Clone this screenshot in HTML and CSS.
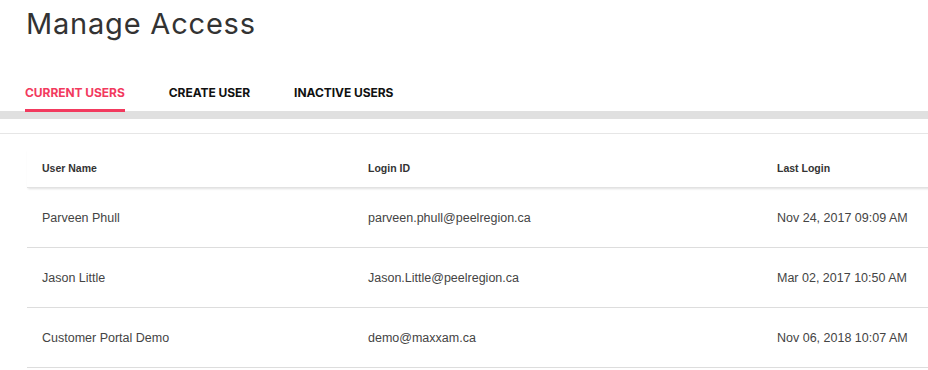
FILE: index.html
```html
<!DOCTYPE html>
<html lang="en">
<head>
    <meta charset="UTF-8">
    <meta name="viewport" content="width=device-width, initial-scale=1.0">
    <title>Manage Access</title>
    <link rel="stylesheet" href="styles.css">
</head>
<body>
    <div class="page">
        <h1 class="page-title">Manage Access</h1>

        <nav class="tabs">
            <a href="#" class="tab tab-active">CURRENT USERS</a>
            <a href="#" class="tab">CREATE USER</a>
            <a href="#" class="tab">INACTIVE USERS</a>
        </nav>

        <div class="tab-content">
            <table class="users-table">
                <colgroup>
                    <col class="col-name">
                    <col class="col-login">
                    <col class="col-last">
                </colgroup>
                <thead>
                    <tr>
                        <th>User Name</th>
                        <th>Login ID</th>
                        <th>Last Login</th>
                    </tr>
                </thead>
                <tbody>
                    <tr>
                        <td>Parveen Phull</td>
                        <td>parveen.phull@peelregion.ca</td>
                        <td>Nov 24, 2017 09:09 AM</td>
                    </tr>
                    <tr>
                        <td>Jason Little</td>
                        <td>Jason.Little@peelregion.ca</td>
                        <td>Mar 02, 2017 10:50 AM</td>
                    </tr>
                    <tr>
                        <td>Customer Portal Demo</td>
                        <td>demo@maxxam.ca</td>
                        <td>Nov 06, 2018 10:07 AM</td>
                    </tr>
                </tbody>
            </table>
        </div>
    </div>
</body>
</html>
```

FILE: styles.css
```css
:root {
    --text: #333333;
    --cell-text: #444444;
    --accent: #f23a5e;
    --bar: #e0e0e0;
    --border: #dddddd;
}

body {
    font-family: "Liberation Sans", Arial, sans-serif;
    margin: 0;
    padding: 0;
    background-color: #ffffff;
    color: var(--text);
    overflow-x: hidden;
}

.page {
    width: 100%;
}

.page-title {
    font-family: Inter, "Open Sans", sans-serif;
    font-weight: 400;
    font-size: 29px;
    line-height: 40px;
    letter-spacing: 0.8px;
    margin: 4px 0 0 26px;
    color: #333333;
}

/* Tabs */
.tabs {
    display: flex;
    gap: 44px;
    margin-top: 38px;
    padding-left: 25px;
    border-bottom: 8px solid var(--bar);
}

.tab {
    font-family: Inter, "Open Sans", sans-serif;
    font-weight: 700;
    font-size: 12px;
    line-height: 16px;
    letter-spacing: -0.05px;
    color: #111111;
    text-decoration: none;
    padding: 3px 0 8px;
    border-bottom: 3px solid transparent;
    margin-bottom: -1px;
}

.tab-active {
    color: var(--accent);
    border-bottom-color: var(--accent);
}

/* Table */
.tab-content {
    margin-top: 14px;
    border-top: 1px solid #e6e6e6;
    padding: 14px 0 0 27px;
}

.users-table {
    width: 960px;
    border-collapse: collapse;
    table-layout: fixed;
}

.col-name {
    width: 326px;
}

.col-login {
    width: 409px;
}

.users-table thead tr {
    box-shadow: 0 2px 2px -1px rgba(0, 0, 0, 0.12);
}

.users-table th {
    text-align: left;
    font-size: 10.5px;
    font-weight: 700;
    color: #333333;
    height: 39px;
    padding: 0 15px;
    border-bottom: 1px solid #e2e2e2;
}

.users-table td {
    font-size: 12.5px;
    color: var(--cell-text);
    height: 59px;
    padding: 0 15px;
    border-bottom: 1px solid var(--border);
}
```
